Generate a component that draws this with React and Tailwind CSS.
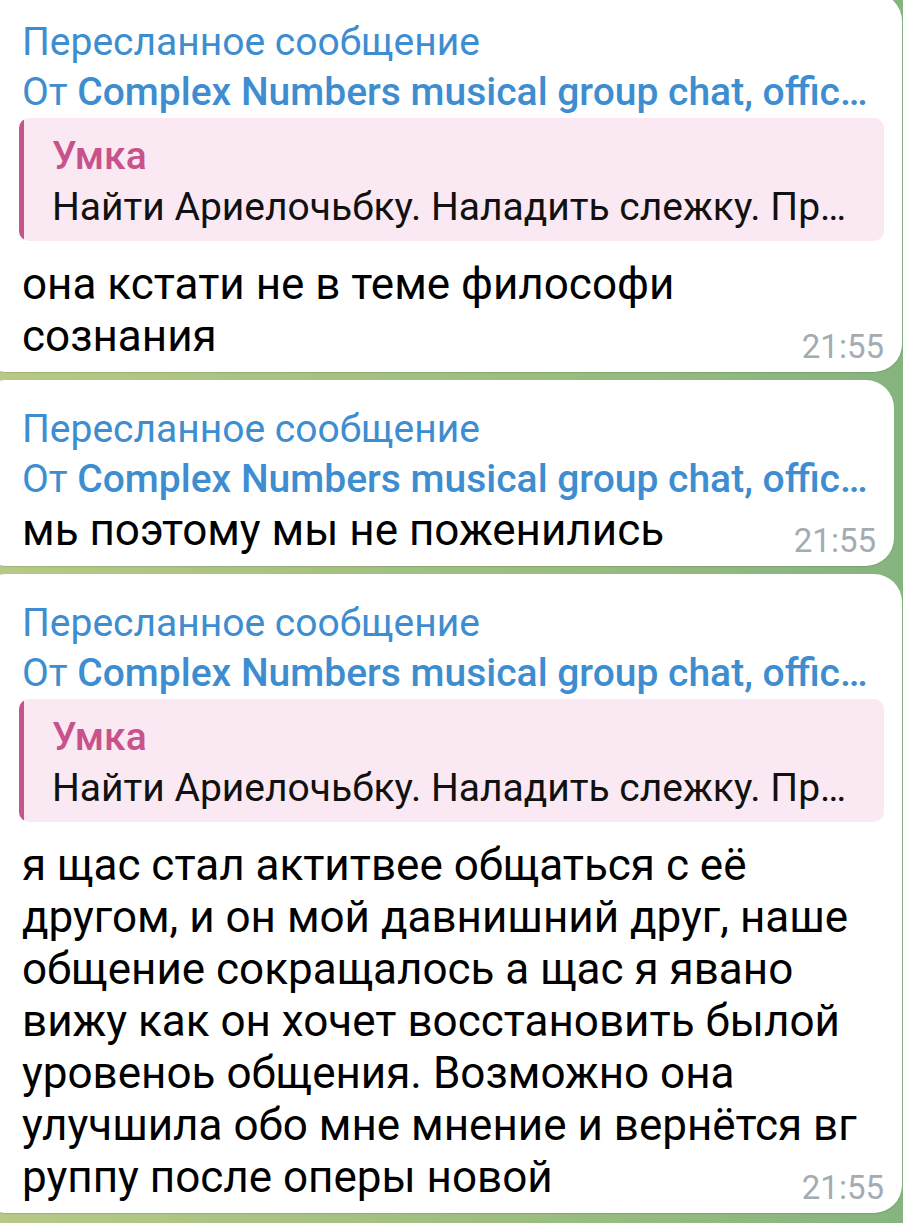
import React from 'react';

const font = { fontFamily: 'Roboto, "Noto Sans", sans-serif' };

// Forward header shown on top of every bubble
const ForwardHeader = () => (
    <div className="text-[#3d8dd0] text-[39px] leading-[50px] whitespace-nowrap">
        <div>Пересланное сообщение</div>
        <div>
            От <span className="font-medium">Complex Numbers musical group chat, offic…</span>
        </div>
    </div>
);

const Quote = () => (
    <div className="-ml-[3px] flex rounded-[10px] overflow-hidden bg-[#fae9f2]">
        <div className="w-[5px] bg-[#c8528b]" />
        <div className="pl-[28px] pt-[13px] pb-[8px] text-[39px] leading-[51px] whitespace-nowrap">
            <div className="text-[#c8528b] font-medium">Умка</div>
            <div className="text-[#111]">Найти Ариелочьбку. Наладить слежку. Пр…</div>
        </div>
    </div>
);

const Time = () => (
    <span className="shrink-0 -mb-[3px] text-[33px] leading-[36px] text-[#a3abb3]">21:55</span>
);

const Bubble = ({ width, quote, lines }) => {
    const head = lines.slice(0, -1);
    const last = lines[lines.length - 1];
    return (
        <div
            className={`-ml-[22px] rounded-[28px] bg-white pl-[44px] pr-[18px] pt-[24px] pb-[10px] shadow-[0_1px_1px_rgba(0,0,0,0.12)] ${width}`}
        >
            <ForwardHeader />
            {quote && (
                <div className="mt-[1px] mb-[17px]">
                    <Quote />
                </div>
            )}
            <div className="text-[44px] leading-[52px] text-black">
                {head.map((l, i) => (
                    <div key={i} className="whitespace-nowrap">{l}</div>
                ))}
                <div className="flex items-end justify-between gap-4">
                    <span className="whitespace-nowrap">{last}</span>
                    <Time />
                </div>
            </div>
        </div>
    );
};

export default function App() {
    return (
        <div
            style={font}
            className="w-[903px] h-[1223px] overflow-hidden bg-linear-to-r from-[#b7c986] via-[#9fbf80] to-[#86b47f]"
        >
            <div className="flex flex-col gap-[8px] -mt-[7px]">
                <Bubble
                    width="w-[924px]"
                    quote
                    lines={['она кстати не в теме философи', 'сознания']}
                />
                <Bubble width="w-[916px]" lines={['мь поэтому мы не поженились']} />
                <Bubble
                    width="w-[924px]"
                    quote
                    lines={[
                        'я щас стал актитвее общаться с её',
                        'другом, и он мой давнишний друг, наше',
                        'общение сокращалось а щас я явано',
                        'вижу как он хочет восстановить былой',
                        'уровеноь общения. Возможно она',
                        'улучшила обо мне мнение и вернётся вг',
                        'руппу после оперы новой',
                    ]}
                />
            </div>
        </div>
    );
}
